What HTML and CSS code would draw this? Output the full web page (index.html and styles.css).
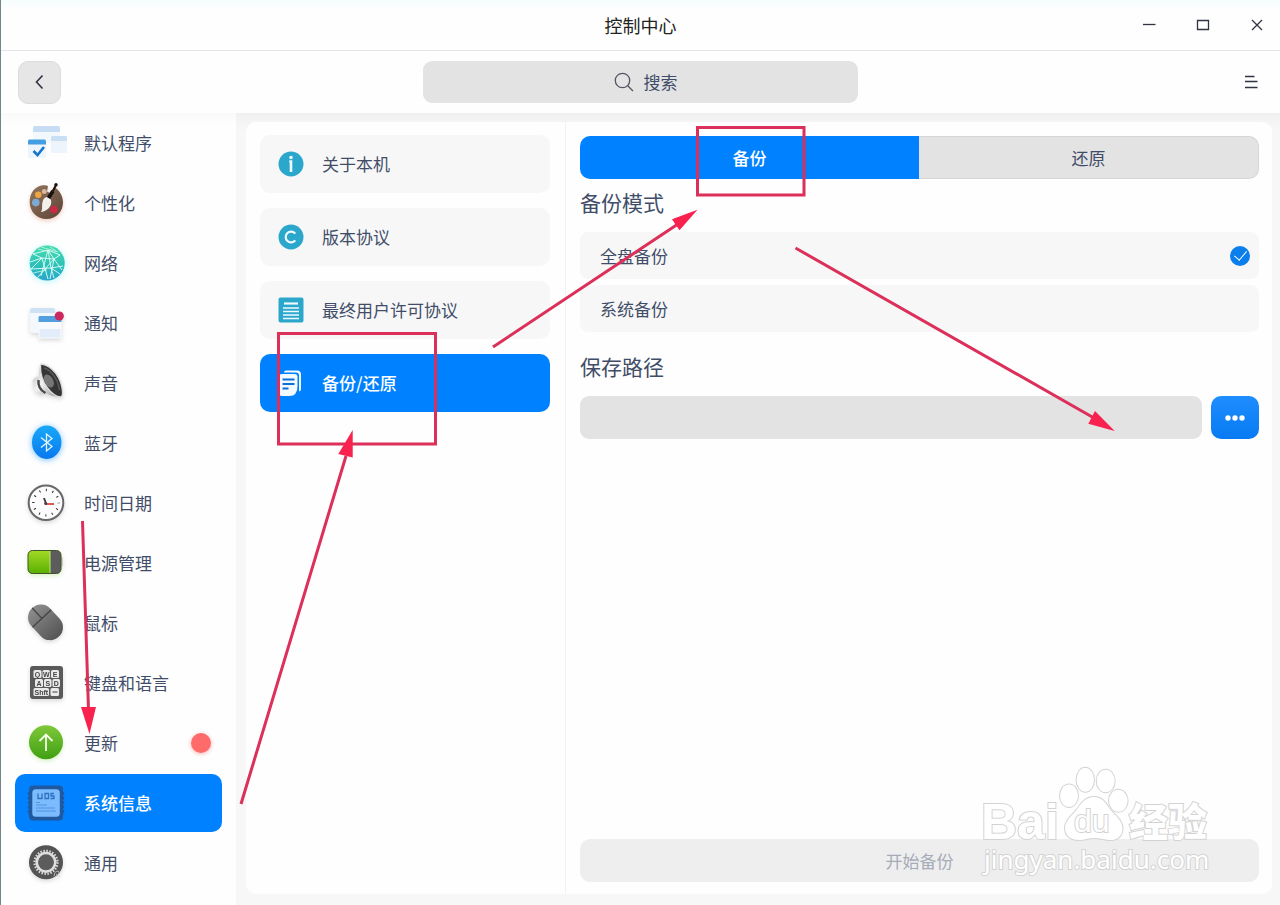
FILE: index.html
```html
<!DOCTYPE html>
<html lang="zh-CN">
<head>
<meta charset="utf-8">
<title>控制中心</title>
<link rel="stylesheet" href="styles.css">
</head>
<body>
<div class="window">
  <header class="titlebar">
    <h1 class="title">控制中心</h1>
    <div class="window-controls">
      <button class="win-btn" aria-label="最小化"><svg width="16" height="16" viewBox="0 0 16 16"><path d="M2 7.5h12.500"/></svg></button>
      <button class="win-btn" aria-label="最大化"><svg width="16" height="16" viewBox="0 0 16 16"><path d="M2.500 3.500h11v9h-11z"/></svg></button>
      <button class="win-btn" aria-label="关闭"><svg width="16" height="16" viewBox="0 0 16 16"><path d="M3 3l10 10M13 3L3 13"/></svg></button>
    </div>
  </header>

  <div class="toolbar">
    <button class="back" aria-label="返回"><svg width="16" height="16" viewBox="0 0 16 16"><path d="M10.500 1.500L4.500 8l6 6.500"/></svg></button>
    <label class="search">
      <svg width="20" height="20" viewBox="0 0 20 20"><circle cx="8.500" cy="8.500" r="7.200"/><path d="M13.700 13.700L19 19"/></svg>
      <input class="search-input" type="text" placeholder="搜索" aria-label="搜索">
    </label>
    <button class="menu" aria-label="菜单"><svg width="16" height="16" viewBox="0 0 16 16"><path d="M2 2.500h9.500M2 7.500h12.500M2 13.500h12.500"/></svg></button>
  </div>

  <main class="content">
    <nav class="sidebar" aria-label="模块">
      <a class="side-item" href="#apps">
        <svg class="side-icon" viewBox="0 0 40 40">
          <rect x="7" y="3" width="27" height="17" rx="1.500" fill="#f3f8fd"/><path d="M7 9V5a2 2 0 0 1 2-2h23a2 2 0 0 1 2 2v4z" fill="#c6dcf3"/>
          <rect x="25" y="13" width="16" height="17" rx="1.500" fill="#edf4fb"/><path d="M25 18v-4l1-1h14l1 1v4z" fill="#c9dff4"/>
          <rect x="2" y="17" width="18" height="18" rx="1" fill="#eef5fc"/><path d="M2 21.500v-4l1-1h16l1 1v4z" fill="#459de2"/>
          <path d="M7.500 28l4 4 6.500-8" fill="none" stroke="#1477cd" stroke-width="2.600"/>
        </svg><span>默认程序</span></a>
      <a class="side-item" href="#personal">
        <svg class="side-icon glow-red" viewBox="0 0 40 40">
          <defs><linearGradient id="wood" x1="0" y1="0" x2="1" y2="1"><stop offset="0" stop-color="#927660"/><stop offset="1" stop-color="#5d4335"/></linearGradient></defs>
          <path d="M17 2.300C9 3 3.500 10 3.700 19.500 4 29 11 36 20.500 36S37 28.500 37 19.500C37 13 33.500 7 28 4l-4 6-3-1.500 1-5.500c-2-.8-3-.9-5-.7z" fill="url(#wood)"/>
          <circle cx="12.300" cy="11.800" r="3.300" fill="#eda642"/><circle cx="18.300" cy="8.500" r="2.500" fill="#d9b79c"/><circle cx="9.800" cy="19.600" r="3.800" fill="#7daad4"/><circle cx="28" cy="26.500" r="3.800" fill="#c92943"/>
          <path d="M21 14c3.500.5 5 3.500 4 7-1 4-5 7.500-10 8 2-3 .5-6 1.500-10 .7-3 2-4.800 4.500-5z" fill="#f4f0ec"/>
          <path d="M22.500 15L27 8" stroke="#171310" stroke-width="3.800"/><path d="M27 8l3-6" stroke="#171310" stroke-width="2"/><circle cx="30" cy="1.800" r="1.700" fill="#171310"/>
        </svg><span>个性化</span></a>
      <a class="side-item" href="#network">
        <svg class="side-icon glow-cyan" viewBox="0 0 40 40">
          <defs><linearGradient id="sea" x1="0" y1="0" x2="0" y2="1"><stop offset="0" stop-color="#48dcae"/><stop offset=".6" stop-color="#2bbfba"/><stop offset="1" stop-color="#2aa5c9"/></linearGradient></defs>
          <circle cx="21.200" cy="20" r="17.500" fill="url(#sea)"/>
          <path d="M7 11l15-4 12 5M22 7l6 9-12-1-9-4M28 16l8 11M28 16l6-4M16 15L5 26l20-1M22 7l-7 26M28 16L12 34M16 15l6 21M25 25l3 10M25 25l12-2M28 16l-4 20M4 19l12-4M22 7l3 18 9 6" fill="none" stroke="#e4fff9" stroke-width=".9"/>
          <path d="M12 6l12 3M15 4l17 5M7 30l14-3M24 4l6 4" fill="none" stroke="#c3f7e8" stroke-width=".8"/>
        </svg><span>网络</span></a>
      <a class="side-item" href="#notice">
        <svg class="side-icon glow-gray" viewBox="0 0 40 40">
          <rect x="4" y="5" width="25" height="25" rx="2" fill="#f3f8fd"/><path d="M4 10V7a2 2 0 0 1 2-2h21a2 2 0 0 1 2 2v3z" fill="#cee1f5"/>
          <rect x="12.500" y="13" width="23" height="22.500" rx="1.500" fill="#f7fbff"/><path d="M12.500 19v-5l1-1h21l1 1v5z" fill="#529edf"/><path d="M13.500 26h21v8.500h-21z" fill="#e2edf9"/>
          <circle cx="33.300" cy="13" r="4.600" fill="#cb285d"/>
        </svg><span>通知</span></a>
      <a class="side-item" href="#sound">
        <svg class="side-icon glow-gray" viewBox="0 0 40 40">
          <defs><linearGradient id="horn" x1="0" y1="0" x2="1" y2="1"><stop offset="0" stop-color="#b9b9b9"/><stop offset=".45" stop-color="#f2f2f2"/><stop offset="1" stop-color="#8a8a8a"/></linearGradient></defs>
          <path d="M14 3l1 10 9 15 11 6q-10-.5-16-4-2 2-5 1.500Q7 29 6.500 18q1.500-4.500 6-4.500z" fill="url(#horn)"/>
          <path d="M12.500 17q-1 9 7 13" fill="none" stroke="#464646" stroke-width="2.400"/>
          <path d="M15.300 1C26 2.500 36 15 36.600 30q0 3-1.600 4C26 33.500 14 19 14.500 3q0-1.500.8-2z" fill="#353535" stroke="#dcdcdc" stroke-width="1.300"/>
          <path d="M18 5c7 2 14 11 15.500 22" fill="none" stroke="#5a5a5a" stroke-width="1.500"/>
          <ellipse cx="22.800" cy="18" rx="4.400" ry="7" transform="rotate(-28 22.800 18)" fill="#777"/>
        </svg><span>声音</span></a>
      <a class="side-item" href="#bluetooth">
        <svg class="side-icon glow-blue" viewBox="0 0 40 40">
          <defs><linearGradient id="bt" x1="0" y1="0" x2="0" y2="1"><stop offset="0" stop-color="#18a9f8"/><stop offset="1" stop-color="#0878ef"/></linearGradient></defs>
          <ellipse cx="20.700" cy="19.300" rx="14.700" ry="16.700" fill="url(#bt)"/>
          <path d="M15 14.500l11 9-5.500 4.500V11l5.500 4.500-11 9" fill="none" stroke="#e5f6ff" stroke-width="1.300"/>
        </svg><span>蓝牙</span></a>
      <a class="side-item" href="#time">
        <svg class="side-icon glow-gray" viewBox="0 0 40 40">
          <circle cx="20" cy="19.700" r="17.300" fill="#fcfcfc" stroke="#686868" stroke-width="2"/>
          <circle cx="20" cy="19.700" r="12.700" fill="none" stroke="#333" stroke-width="2.400" stroke-dasharray="1 5.650" stroke-dashoffset=".5"/>
          <path d="M20 20.500l-2-5.500" stroke="#444" stroke-width="2"/><path d="M19 21h9" stroke="#e1574f" stroke-width="2"/><circle cx="19.700" cy="20.500" r="1.500" fill="#444"/>
        </svg><span>时间日期</span></a>
      <a class="side-item" href="#power">
        <svg class="side-icon glow-green" viewBox="0 0 40 40">
          <defs><linearGradient id="cell" x1="0" y1="0" x2="0" y2="1"><stop offset="0" stop-color="#a4d927"/><stop offset="1" stop-color="#59b000"/></linearGradient></defs>
          <rect x="33" y="14" width="4" height="10" rx="2" fill="#cfcfcf"/>
          <rect x="2" y="7.500" width="33" height="23" rx="4.500" fill="#5c5c5c"/>
          <path d="M24 7.500H6.500A4.500 4.500 0 0 0 2 12v14a4.500 4.500 0 0 0 4.500 4.500H24z" fill="url(#cell)"/>
          <path d="M24 8v22" stroke="#bce970" stroke-width="1"/>
          <rect x="2" y="7.500" width="33" height="23" rx="4.500" fill="none" stroke="#42532b"/>
        </svg><span>电源管理</span></a>
      <a class="side-item" href="#mouse">
        <svg class="side-icon glow-gray" viewBox="0 0 40 40">
          <defs><linearGradient id="mice" x1="0" y1="0" x2="0" y2="1"><stop offset="0" stop-color="#8c8c8c"/><stop offset="1" stop-color="#555"/></linearGradient></defs>
          <g transform="rotate(-43 19.500 19.300)"><rect x="6.700" y="-.2" width="25.600" height="39" rx="12.500" fill="url(#mice)"/><path d="M6.700 14h25.600M19.500-.2V14" stroke="#434343" stroke-width="1.300"/></g>
        </svg><span>鼠标</span></a>
      <a class="side-item" href="#keyboard">
        <svg class="side-icon glow-gray" viewBox="0 0 40 40">
          <rect x="4" y="3" width="33" height="33" rx="3" fill="#5a5a5a"/>
          <g fill="#e9e9e9"><rect x="7.500" y="7" width="8" height="8" rx="1.500"/><rect x="16.500" y="7" width="7.500" height="8" rx="1.500"/><rect x="25" y="7" width="8" height="8" rx="1.500"/><rect x="9" y="16" width="8" height="8" rx="1.500"/><rect x="18" y="16" width="7.500" height="8" rx="1.500"/><rect x="26.500" y="16" width="7.500" height="8" rx="1.500"/><rect x="7.500" y="25" width="15.500" height="8" rx="1.500"/><rect x="24.500" y="25" width="8.500" height="8" rx="1.500"/></g>
          <g class="keys"><text x="11.500" y="13.700">Q</text><text x="20.300" y="13.700">W</text><text x="29" y="13.700">E</text><text x="13" y="22.700">A</text><text x="21.800" y="22.700">S</text><text x="30.300" y="22.700">D</text><text x="15.300" y="31.700">Shft</text></g>
          <path d="M26.500 29h5" stroke="#666" stroke-width="1.300"/>
        </svg><span>键盘和语言</span></a>
      <a class="side-item" href="#update">
        <svg class="side-icon glow-green" viewBox="0 0 40 40">
          <defs><linearGradient id="leaf" x1="0" y1="0" x2="0" y2="1"><stop offset="0" stop-color="#7fc83a"/><stop offset="1" stop-color="#3fa012"/></linearGradient></defs>
          <circle cx="20" cy="19.300" r="17" fill="url(#leaf)"/><path d="M20 28V12M13.500 18L20 11.500l6.500 6.500" fill="none" stroke="#f4ffe9" stroke-width="1.800"/>
        </svg><span>更新</span><i class="dot"></i></a>
      <a class="side-item selected" href="#system" aria-current="page">
        <svg class="side-icon" viewBox="0 0 40 40">
          <rect x="3" y="2.500" width="34" height="35" rx="4" fill="#20599f"/>
          <path d="M2.500 9v23M37.500 9v23" stroke="#20599f" stroke-width="1.200" stroke-dasharray="3 1.500"/>
          <rect x="6.300" y="6.300" width="27.500" height="27.500" rx="3.500" fill="#7dbbff"/>
          <path d="M12 10.500v5h4v-5M19 10.500h3.500v5H19zM28 10.500h-3v2.500h3v2.500h-3.500" fill="none" stroke="#2e70bd" stroke-width="1.300"/>
          <path d="M10 19.500h4M10 22h11M10 25h19M10 28h20" stroke="#4589d8" stroke-width=".8"/>
        </svg><span>系统信息</span></a>
      <a class="side-item" href="#general">
        <svg class="side-icon glow-gray" viewBox="0 0 40 40">
          <circle cx="20" cy="19.300" r="17" fill="#545454"/>
          <circle cx="20" cy="19.300" r="11.500" fill="none" stroke="#dedede" stroke-width="2.200" stroke-dasharray="1.500 1.510"/>
          <circle cx="20" cy="19.300" r="9.300" fill="#5c5c5c" stroke="#dedede" stroke-width="2.600"/>
          <path d="M28 33q0-4 3-5 3 0 2 3M30 31l4 3" fill="none" stroke="#ccc" stroke-width=".8"/>
        </svg><span>通用</span></a>
    </nav>

    <div class="panel">
      <nav class="subnav" aria-label="系统信息">
        <a class="sub-item" href="#about">
          <svg class="sub-icon" viewBox="0 0 26 26"><circle cx="13" cy="13" r="12.500" fill="#2ca7cc"/><circle cx="13" cy="6.500" r="1.800" fill="#eefaff"/><path d="M11.300 10.500H13V21" fill="none" stroke="#eefaff" stroke-width="2.600"/></svg>
          <span>关于本机</span></a>
        <a class="sub-item" href="#edition">
          <svg class="sub-icon" viewBox="0 0 26 26"><circle cx="13" cy="13" r="12.500" fill="#2ca7cc"/><path d="M17.300 9.600a5.400 5.400 0 1 0 0 6.800" fill="none" stroke="#eefaff" stroke-width="2.200"/></svg>
          <span>版本协议</span></a>
        <a class="sub-item" href="#eula">
          <svg class="sub-icon" viewBox="0 0 26 26"><rect x=".5" y=".5" width="25" height="25" rx="2" fill="#2ca7cc"/><path d="M6 6.500h14" stroke="#eefaff" stroke-width="2.200"/><path d="M5 11h16M5 14.500h16M5 18h16M5 21.500h16" stroke="#eefaff" stroke-width="1.400"/></svg>
          <span>最终用户许可协议</span></a>
        <a class="sub-item selected" href="#backup" aria-current="page">
          <svg class="sub-icon" viewBox="0 0 26 26"><path d="M6 2.500Q6 .5 8 .5h11q4 0 4 4V19q0 2-2 2.500V5.500q0-3-3-3z" fill="#f3faff"/><path d="M1 7q0-3 3-3h12.500q3 0 3 3v9q0 10-8 10H4q-3 0-3-3z" fill="#f3faff"/><path d="M4.500 9.500h12M4.500 14h12M4.500 18.500h6" stroke="#0a6fdc" stroke-width="2"/></svg>
          <span>备份/还原</span></a>
      </nav>

      <section class="detail">
        <div class="tabs" role="tablist">
          <button class="tab active" role="tab" aria-selected="true">备份</button>
          <button class="tab" role="tab" aria-selected="false">还原</button>
        </div>
        <h2 class="heading">备份模式</h2>
        <div class="modes">
          <label class="mode"><span>全盘备份</span><input class="radio" type="radio" name="mode" checked></label>
          <label class="mode"><span>系统备份</span><input class="radio" type="radio" name="mode"></label>
        </div>
        <h2 class="heading save-heading" id="path-label">保存路径</h2>
        <div class="path-row">
          <input class="path" type="text" aria-labelledby="path-label">
          <button class="browse" aria-label="浏览"><svg width="20" height="6" viewBox="0 0 20 6"><circle cx="3" cy="3" r="2.700"/><circle cx="10" cy="3" r="2.700"/><circle cx="17" cy="3" r="2.700"/></svg></button>
        </div>
        <button class="start" disabled>开始备份</button>
      </section>
    </div>
  </main>

  <svg class="watermark" width="240" height="120" viewBox="0 0 240 120">
    <g class="wm-shape">
      <text class="wm-bai" x="1" y="73">Bai</text>
      <ellipse cx="89" cy="29.700" rx="9" ry="11.300"/><ellipse cx="105.300" cy="13.700" rx="8.700" ry="12"/><ellipse cx="125.700" cy="15" rx="9" ry="11.300"/><ellipse cx="138.300" cy="34.700" rx="9.300" ry="11"/>
      <path d="M114 31c8 0 11 5 15 11 5 7 14 12 13.500 21-.5 8-6 11.500-13 11-6-.5-10-2-15.500-2s-9 2-15 2c-8 0-14-4-14-12 0-8 8-13 13-20 4-6 8-11 16-11z"/>
      <text class="wm-du" x="94" y="66">du</text>
      <text class="wm-cn" x="149" y="70">经验</text>
      <text class="wm-url" x="4" y="103">jingyan.baidu.com</text>
    </g>
  </svg>

  <svg class="marks" width="1280" height="905" viewBox="0 0 1280 905" aria-hidden="true">
    <g class="mark-line"><rect x="278.500" y="333.500" width="157" height="110.500"/><rect x="697.500" y="127.500" width="106.500" height="67.500"/><path d="M82.500 521L88.500 710M241 804L346 456M493 347L678 224M795.500 248L1094 418"/></g>
    <g class="mark-head"><path d="M81 707h15l-6.500 27zM338.300 454l14.400 3.500V430zM672 219.300l7.500 11 18-20.600zM1095 411l-6.700 12.700 26.400 7.300z"/></g>
  </svg>
</div>
</body>
</html>
```
FILE: styles.css
```css
* { box-sizing: border-box; }
body {
  margin: 0;
  font-family: "Noto Sans CJK SC", "Noto Sans", sans-serif;
  font-size: 17px;
  line-height: 26px;
  color: #414d68;
}
button, input { font: inherit; color: inherit; border: 0; margin: 0; padding: 0; }
button { background: none; display: flex; align-items: center; justify-content: center; }
a { color: inherit; text-decoration: none; }

.window {
  position: relative;
  display: flex;
  flex-direction: column;
  min-height: 100vh;
  background: #fefefe;
  border-left: 1px solid #75838a;
  overflow: hidden;
}
.titlebar {
  display: grid;
  grid-template-columns: 1fr auto 1fr;
  align-items: center;
  height: 51px;
  border-bottom: 1px solid #e3e6e6;
  background: linear-gradient(#f5fdfd, #fefefe 10px);
}
.title { grid-column: 2; margin: 0; font-size: 18px; font-weight: 400; color: #222; }
.window-controls { display: flex; justify-content: flex-end; gap: 38px; padding-right: 15px; }
.win-btn svg, .back svg, .menu svg, .search svg { fill: none; stroke: #303440; stroke-width: 1.3; }

.toolbar {
  display: grid;
  grid-template-columns: 1fr 35% 1fr;
  align-items: center;
  height: 62px;
  padding: 0 17px;
}
.back { width: 43px; height: 43px; border: 1px solid #dcdcdc; border-radius: 10px; background: #e6e6e6; }
.back svg { stroke-width: 1.6; }
.search {
  display: flex;
  align-items: center;
  justify-content: center;
  gap: 10px;
  height: 42px;
  padding-left: 12px;
  border-radius: 9px;
  background: #e3e3e3;
}
.search svg { stroke: #535765; }
.search-input { width: 36px; background: none; outline: 0; }
.search-input::placeholder { color: #414d68; opacity: 1; }
.menu { justify-self: end; padding-right: 4px; }

.content { flex: 1; display: flex; background: linear-gradient(#f0f0f0, #f7f7f7 16px); }
.sidebar {
  display: flex;
  flex-direction: column;
  gap: 2px;
  width: 235px;
  padding: 1px 14px 0;
  background: linear-gradient(#f9f9f9, #fefefe 12px);
}
.side-item {
  display: flex;
  align-items: center;
  gap: 18px;
  height: 58px;
  padding: 0 11px;
  border-radius: 10px;
}
.side-icon { width: 40px; height: 40px; overflow: visible; }
.selected { background: #0081ff; color: #fff; font-weight: 500; }
.dot { width: 20px; height: 20px; margin-left: auto; border-radius: 50%; background: #ff6a6a; box-shadow: 0 1px 4px #ffb3b3; }
.keys { font: 700 7px "Liberation Sans", sans-serif; fill: #444; text-anchor: middle; }
.glow-red { filter: drop-shadow(0 2px 2px #e5a08c80); }
.glow-cyan { filter: drop-shadow(0 1px 3px #6cf0f880); }
.glow-gray { filter: drop-shadow(0 2px 2px #8888884d); }
.glow-blue { filter: drop-shadow(0 1px 3px #37a3ffb3); }
.glow-green { filter: drop-shadow(0 2px 2px #a6e07266); }

.panel {
  flex: 1;
  display: flex;
  margin: 9px 8px 11px 10px;
  border-radius: 10px;
  background: #fefefe;
}
.subnav {
  display: flex;
  flex-direction: column;
  gap: 15px;
  width: 320px;
  padding: 13px 15px 14px 14px;
  border-right: 1px solid #f3f3f3;
}
.sub-item {
  display: flex;
  align-items: center;
  gap: 18px;
  height: 58px;
  padding: 0 18px;
  border-radius: 10px;
  background: #f7f7f7;
}
.sub-icon { width: 26px; height: 26px; }
.sub-item.selected { background: #0081ff; }

.detail { flex: 1; display: flex; flex-direction: column; padding: 14px 13px 12px 14px; }
.tabs { display: flex; height: 43px; }
.tab { flex: 1; border: 1px solid #d6d6d6; border-left: 0; border-radius: 0 10px 10px 0; background: #e3e3e3; }
.tab.active { border: 0; border-radius: 10px 0 0 10px; background: #0081ff; color: #fff; font-weight: 500; }
.heading { margin: 7px 0 14px; font-size: 21px; line-height: 32px; font-weight: 400; }
.modes { display: flex; flex-direction: column; gap: 6px; }
.mode {
  display: flex;
  align-items: center;
  justify-content: space-between;
  height: 47px;
  padding: 0 9px 0 20px;
  border-radius: 8px;
  background: #f7f7f7;
}
.radio { appearance: none; display: grid; place-items: center; width: 20px; height: 20px; border-radius: 50%; }
.radio:checked { background: #0a7eeb; }
.radio:checked::after {
  content: "";
  width: 6px;
  height: 11px;
  margin-bottom: 3px;
  border: solid #fff;
  border-width: 0 1px 1px 0;
  transform: rotate(40deg);
}
.save-heading { margin-top: 18px; }
.path-row { display: flex; gap: 9px; }
.path { flex: 1; min-width: 0; height: 43px; padding: 0 12px; border-radius: 9px; background: #e3e3e3; }
.browse { width: 48px; height: 43px; border-radius: 10px; background: linear-gradient(#1e8dff, #077bf2); }
.browse svg { fill: #fff; }
.start { height: 43px; margin-top: auto; border-radius: 10px; background: #eee; color: #a5abb7; }

.watermark { position: absolute; right: 60px; bottom: 19px; pointer-events: none; }
.wm-shape { fill: #fff; stroke: #d3d3d3; stroke-width: 2; paint-order: stroke; }
.wm-bai { font: 700 50px "Liberation Sans", sans-serif; }
.wm-du { font: 400 32px "Liberation Sans", sans-serif; }
.wm-cn { font: 900 39px "Noto Sans CJK SC", sans-serif; }
.wm-url { font: 400 26px "Noto Sans", sans-serif; }

.marks { position: absolute; top: 0; left: -1px; pointer-events: none; }
.mark-line { fill: none; stroke: #dc2f59; stroke-width: 3; }
.mark-head { fill: #f9214e; }
```
